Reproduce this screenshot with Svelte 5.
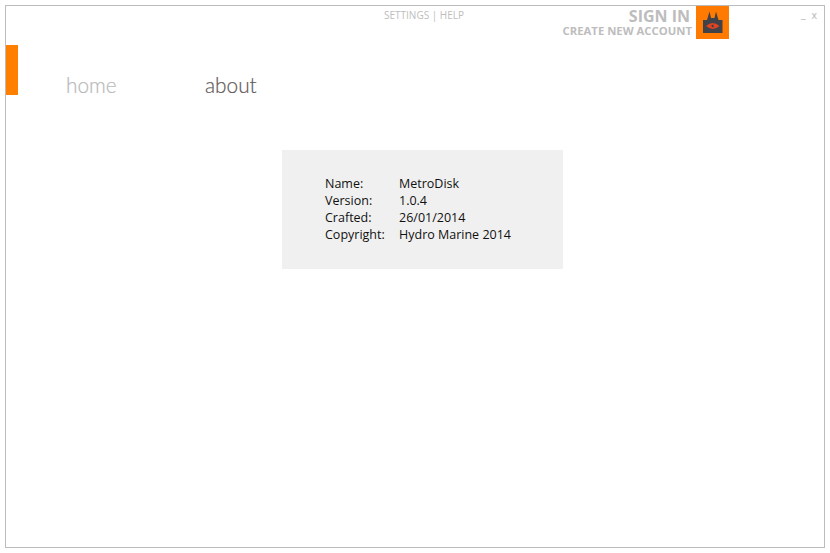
<script>
  const info = [
    ['Name:', 'MetroDisk'],
    ['Version:', '1.0.4'],
    ['Crafted:', '26/01/2014'],
    ['Copyright:', 'Hydro Marine 2014']
  ];
</script>

<div class="window">
  <header class="topbar">
    <div class="links">SETTINGS | HELP</div>
    <div class="account">
      <div class="account-text">
        <div class="sign-in">SIGN IN</div>
        <div class="create">CREATE NEW ACCOUNT</div>
      </div>
      <div class="avatar">
        <svg width="33" height="33" viewBox="0 0 33 33">
          <path d="M7 14H11L13.500 5.500 15 12h3.500L20 5.500 22.500 14h4V27H7z" fill="#3f4249" />
          <path d="M10 20q6.750-6 13.500 0q-6.750 6-13.500 0z" fill="#e0431f" />
          <circle cx="16.700" cy="20" r="1.200" fill="#3f4249" />
        </svg>
      </div>
    </div>
    <div class="controls">
      <span class="minimize">_</span>
      <span>x</span>
    </div>
  </header>

  <div class="nav-row">
    <div class="marker"></div>
    <nav class="tabs">
      <span class="tab">home</span>
      <span class="tab active">about</span>
    </nav>
  </div>

  <section class="panel">
    <div class="info">
      {#each info as row}
        <span>{row[0]}</span>
        <span>{row[1]}</span>
      {/each}
    </div>
  </section>
</div>

<style>
  :global(body) {
    margin: 0;
    background: #fff;
  }

  .window {
    box-sizing: border-box;
    width: 820px;
    height: 543px;
    margin: 5px 0 0 5px;
    border: 1px solid #bcbcbc;
    font-family: "Open Sans", sans-serif;
  }

  .topbar {
    display: flex;
    height: 33px;
  }

  .links {
    flex: 1;
    margin: 2px 0 0 378px;
    font-size: 10px;
    line-height: 14px;
    color: #bdbdbd;
  }

  .account {
    display: flex;
    gap: 4px;
  }

  .account-text {
    text-align: right;
    font-weight: 700;
    color: #bdbdbd;
    white-space: nowrap;
  }

  .sign-in {
    font-size: 16px;
    line-height: 15px;
    margin-top: 3px;
    padding-right: 2px;
  }

  .create {
    font-size: 11.300px;
    line-height: 13px;
  }

  .avatar {
    width: 33px;
    height: 33px;
    background: #ff7a00;
  }

  .controls {
    box-sizing: border-box;
    width: 95px;
    display: flex;
    justify-content: flex-end;
    gap: 6px;
    padding-right: 7px;
    padding-top: 2px;
    font-size: 10.500px;
    line-height: 14px;
    color: #b5b5b5;
  }

  .minimize {
    margin-top: -1px;
  }

  .nav-row {
    display: flex;
    margin-top: 6px;
    height: 50px;
  }

  .marker {
    width: 12px;
    height: 50px;
    background: #ff8000;
  }

  .tabs {
    display: flex;
    margin: 25px 0 0 48px;
    font-family: Lato, sans-serif;
    font-weight: 300;
    font-size: 20.800px;
    line-height: 30px;
    -webkit-text-stroke: 0.2px;
  }

  .tab {
    width: 139px;
    color: #b8b8b8;
  }

  .active {
    color: #5f5a58;
  }

  .panel {
    box-sizing: border-box;
    width: 281px;
    height: 119px;
    margin: 55px 0 0 276px;
    padding: 25px 0 0 43px;
    background: #f0f0f0;
  }

  .info {
    display: grid;
    grid-template-columns: 74px auto;
    font-size: 12.500px;
    line-height: 17px;
    color: #111;
  }
</style>
